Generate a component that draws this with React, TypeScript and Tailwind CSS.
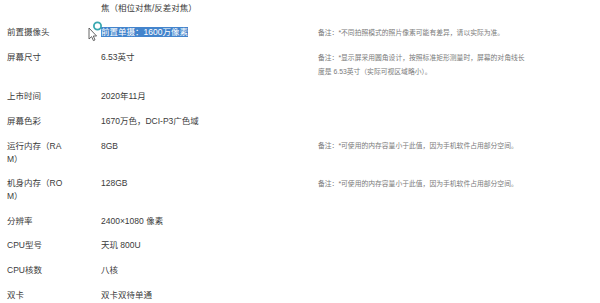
const font = { fontFamily: '"Liberation Sans", "Noto Sans CJK SC", sans-serif' };

type Row = { label: string; value: React.ReactNode; note?: string };

const rows: Row[] = [
  {
    label: '前置摄像头',
    value: <span className="bg-[#4384cc] text-white">前置单摄：1600万像素</span>,
    note: '备注：*不同拍照模式的照片像素可能有差异，请以实际为准。',
  },
  {
    label: '屏幕尺寸',
    value: '6.53英寸',
    note: '备注：*显示屏采用圆角设计，按照标准矩形测量时，屏幕的对角线长度是 6.53英寸（实际可视区域略小）。',
  },
  { label: '上市时间', value: '2020年11月' },
  { label: '屏幕色彩', value: '1670万色，DCI-P3广色域' },
  {
    label: '运行内存（RAM）',
    value: '8GB',
    note: '备注：*可使用的内存容量小于此值，因为手机软件占用部分空间。',
  },
  {
    label: '机身内存（ROM）',
    value: '128GB',
    note: '备注：*可使用的内存容量小于此值，因为手机软件占用部分空间。',
  },
  { label: '分辨率', value: '2400×1080 像素' },
  { label: 'CPU型号', value: '天玑 800U' },
  { label: 'CPU核数', value: '八核' },
  { label: '双卡', value: '双卡双待单通' },
];

const Cursor = () => (
  <svg className="absolute left-[86px] top-[20px]" width="18" height="22" viewBox="0 0 18 22">
    <circle cx="11.5" cy="6" r="3.6" fill="none" stroke="#3aa8b0" strokeWidth="1.8" />
    <path d="M3 8 L3 19 L5.6 16.6 L7.4 20.6 L9 19.9 L7.3 16 L10.6 16 Z" fill="#fff" stroke="#555" strokeWidth="0.9" strokeLinejoin="round" />
  </svg>
);

export default function App() {
  return (
    <div className="relative w-[600px] h-[303px] overflow-hidden bg-white text-[#3a3a3a]" style={font}>
      <div className="flex pl-[7px] pt-[1.5px] pb-[6px] text-[8.5px] leading-[13px]">
        <div className="w-[94px] shrink-0" />
        <div className="w-[217px] shrink-0">焦（相位对焦/反差对焦）</div>
      </div>
      {rows.map((r) => (
        <div key={r.label} className="flex pl-[7px] py-[5.8px] text-[8.5px] leading-[13px]">
          <div className="w-[94px] shrink-0 pr-[36px] break-all">{r.label}</div>
          <div className="w-[217px] shrink-0">{r.value}</div>
          {r.note && (
            <div className="w-[209px] shrink-0 text-[6.8px] leading-[14px] -mt-[0.5px] text-[#7a7a7a]">{r.note}</div>
          )}
        </div>
      ))}
      <Cursor />
    </div>
  );
}
